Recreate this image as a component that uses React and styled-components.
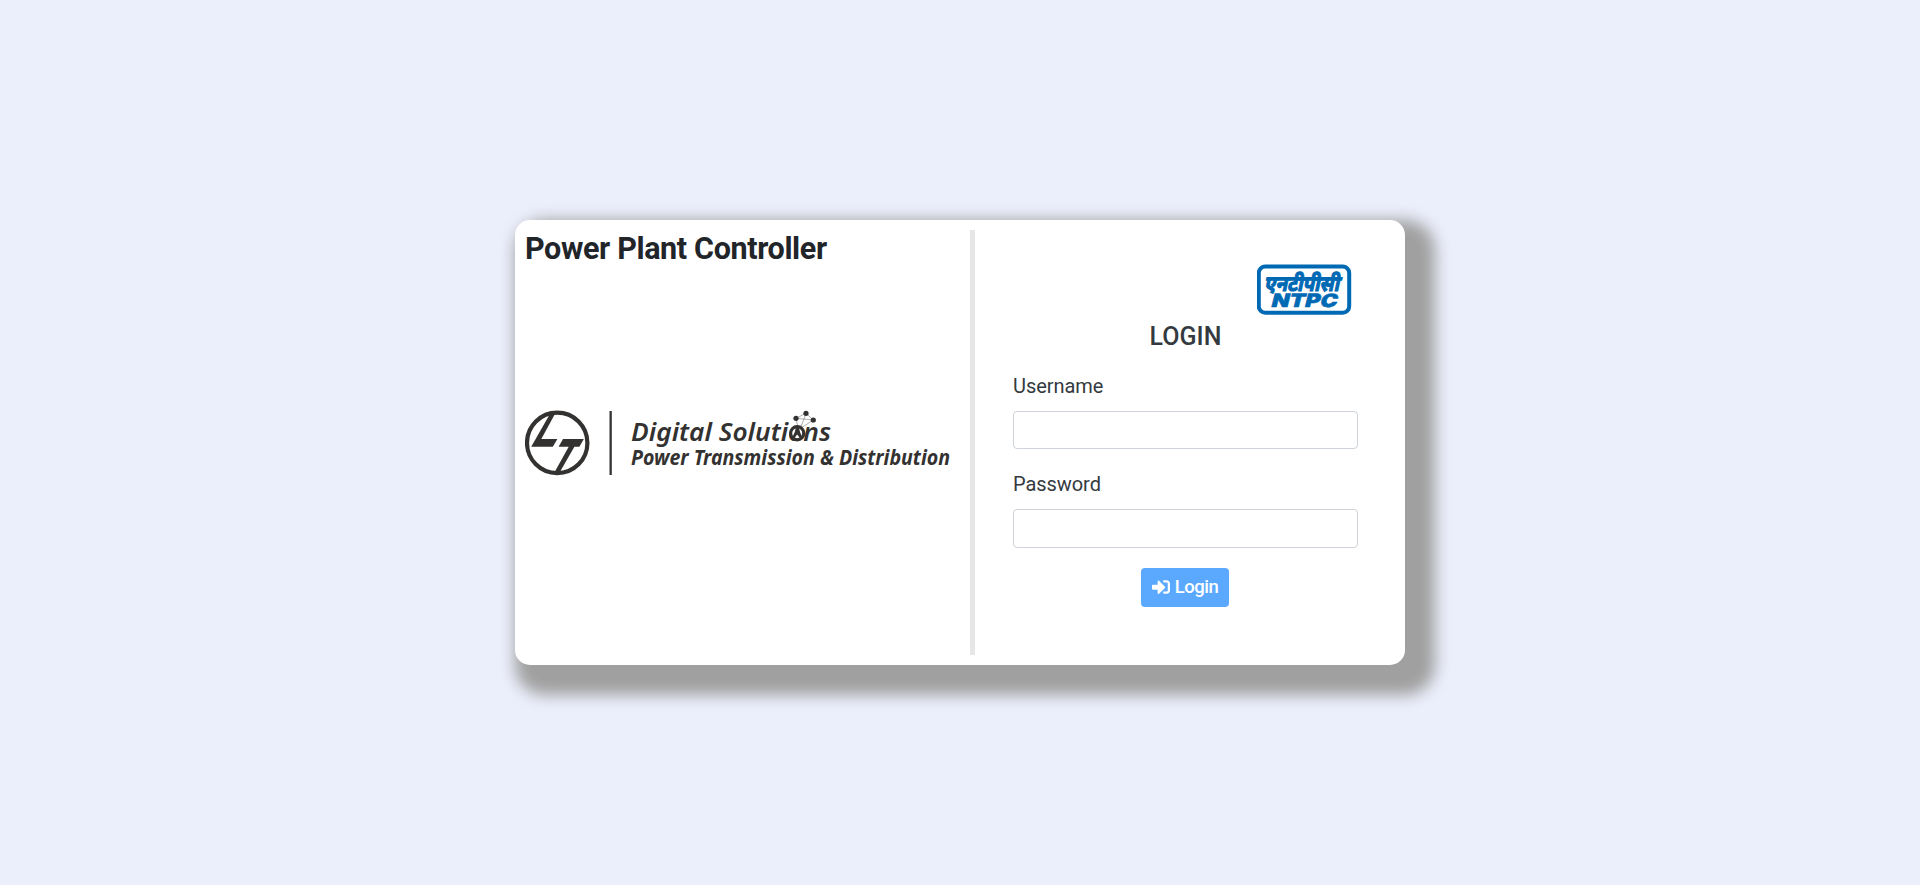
import React from 'react';
import styled, { createGlobalStyle } from 'styled-components';
import { FaSignInAlt } from 'react-icons/fa';

const Global = createGlobalStyle`
  *, *::before, *::after { box-sizing: border-box; }
  body {
    margin: 0;
    background: #ebeefb;
    color: #212529;
    font-family: Roboto, 'Liberation Sans', sans-serif;
    font-size: 16px;
    line-height: 1.5;
  }
`;

const Page = styled.main`
  display: flex;
  align-items: center;
  justify-content: center;
  height: 885px;
`;

const Card = styled.section`
  display: flex;
  width: 890px;
  height: 445px;
  padding: 10px;
  border-radius: 15px;
  background: #fff;
  box-shadow: 15px 15px 15px 15px #a0a0a0;
`;

const Brand = styled.div`
  display: flex;
  flex-direction: column;
  width: 445px;
`;

const Title = styled.h1`
  margin: 0;
  height: 38px;
  font-size: 30.5px;
  font-weight: 700;
  line-height: 38px;
  letter-spacing: -0.36px;
`;

const CompanyLogo = styled.svg`
  display: block;
  width: 430px;
  height: 66px;
  margin-top: 142px;
  font-family: 'Noto Sans', 'Open Sans', sans-serif;
  font-style: italic;
  fill: #333231;
`;

const Divider = styled.div`
  width: 5px;
  background: #e6e6e6;
`;

const LoginForm = styled.form`
  display: flex;
  flex-direction: column;
  width: 345px;
  margin-left: 38px;
  padding-top: 34px;
  color: #343a40;
`;

const ClientLogo = styled.svg`
  width: 95px;
  height: 51px;
  margin-right: 6px;
  align-self: flex-end;
`;

const Heading = styled.h2`
  margin: 7px 0 -1px;
  font-size: 25px;
  font-weight: 500;
  line-height: 30px;
  text-align: center;
`;

const Field = styled.label`
  display: flex;
  flex-direction: column;
  gap: 10px;
  margin-top: 20px;
  font-size: 20px;
  line-height: 30px;
  letter-spacing: -0.06px;
`;

const Input = styled.input`
  width: 100%;
  height: ${(p) => p.$height}px;
  padding: 6px 12px;
  border: 1px solid #ced4da;
  border-radius: 4px;
  background: #fff;
  font: inherit;
`;

const LoginButton = styled.button`
  display: flex;
  align-items: center;
  justify-content: center;
  gap: 5px;
  width: 88px;
  height: 39px;
  margin: 20px 1px 0 0;
  padding: 0 0 2px;
  align-self: center;
  border: 0;
  border-radius: 4px;
  background: #5aa9ff;
  color: #fff;
  font: 500 18.5px Roboto, sans-serif;
  letter-spacing: -0.5px;
`;

export default function App() {
  return (
    <>
      <Global />
      <Page>
        <Card>
          <Brand>
            <Title>Power Plant Controller</Title>
            <CompanyLogo viewBox="0 0 430 66">
              <circle cx="32.2" cy="32.9" r="30.2" fill="none" stroke="#333231" strokeWidth="4.2" />
              <path d="M25.2 3.5h5L16.3 29H32.4l-4.6 7.7H6.2z" />
              <path d="M38 29h20.8l-4.4 7.7h-5L34.3 63h-5.2l14.6-26.3H33.6z" />
              <path d="M84.5 1h2.3v64h-2.3z" />
              <text x="106" y="30.6" fontSize="26" fontWeight="600" textLength="200" lengthAdjust="spacingAndGlyphs">Digital Solutions</text>
              <text x="106" y="54.7" fontSize="20.5" fontWeight="700" textLength="319" lengthAdjust="spacingAndGlyphs">Power Transmission &amp; Distribution</text>
              <path d="M271 8.3l10-5 7.3 6.7-17.3-1.7 3 14 7-19M288.3 10L276 18" fill="none" stroke="#777" strokeWidth=".6" />
              <circle cx="271" cy="8.3" r="2.6" />
              <circle cx="281" cy="3.3" r="2.6" />
              <circle cx="288.3" cy="10" r="2.6" />
              <circle cx="272.2" cy="23.2" r="6.6" fill="#fff" stroke="#333231" strokeWidth="3.2" />
              <path d="M271 17h2.8l1.2 5 2.5 6h-2.6l-2.7-3.5-2.7 3.5H267l2.8-6z" />
            </CompanyLogo>
          </Brand>
          <Divider />
          <LoginForm>
            <ClientLogo viewBox="0 0 95 51">
              <rect x="1.8" y="2.4" width="90.4" height="46.4" rx="6.5" fill="#fff" stroke="#0069b4" strokeWidth="4" />
              <g fill="#0069b4" stroke="#0069b4">
                <text transform="translate(7 26.6) skewX(-12)" strokeWidth="1.2" fontFamily="'Noto Sans', sans-serif" fontSize="21.5" fontWeight="700" textLength="75" lengthAdjust="spacingAndGlyphs">एनटीपीसी</text>
                <text transform="translate(13.5 43.2) skewX(-14)" strokeWidth=".5" fontFamily="Inter, sans-serif" fontSize="18.5" fontWeight="900" textLength="66" lengthAdjust="spacingAndGlyphs">NTPC</text>
              </g>
            </ClientLogo>
            <Heading>LOGIN</Heading>
            <Field>
              Username
              <Input type="text" $height={38} />
            </Field>
            <Field>
              Password
              <Input type="password" $height={39} />
            </Field>
            <LoginButton type="button">
              <FaSignInAlt size={18} />
              Login
            </LoginButton>
          </LoginForm>
        </Card>
      </Page>
    </>
  );
}
